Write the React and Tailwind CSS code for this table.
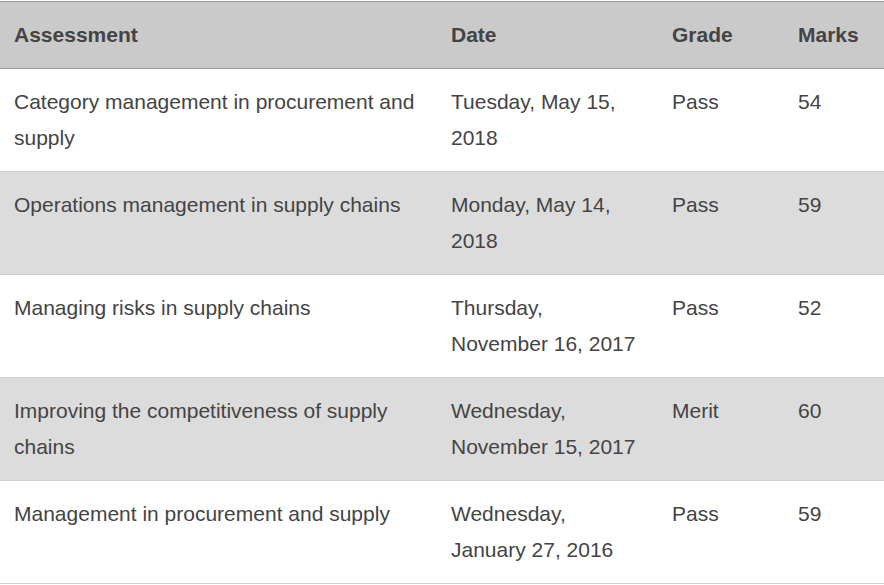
import React from 'react';

const rows = [
  { name: 'Category management in procurement and supply', date: 'Tuesday, May 15, 2018', grade: 'Pass', marks: '54' },
  { name: 'Operations management in supply chains', date: 'Monday, May 14, 2018', grade: 'Pass', marks: '59' },
  { name: 'Managing risks in supply chains', date: 'Thursday, November 16, 2017', grade: 'Pass', marks: '52' },
  { name: 'Improving the competitiveness of supply chains', date: 'Wednesday, November 15, 2017', grade: 'Merit', marks: '60' },
  { name: 'Management in procurement and supply', date: 'Wednesday, January 27, 2016', grade: 'Pass', marks: '59' },
];

const App = () => {
  return (
    <div className="w-[884px] bg-white pt-px font-['Liberation_Sans',Arial,sans-serif] text-[21px] leading-[36px] text-[#444]">
      <table className="w-full table-fixed border-collapse">
        <colgroup>
          <col className="w-[437px]" />
          <col className="w-[221px]" />
          <col className="w-[126px]" />
          <col className="w-[100px]" />
        </colgroup>
        <thead>
          <tr className="border-y border-[#999] bg-[#cacaca]">
            <th className="px-[14px] py-[15px] text-left align-top font-bold">Assessment</th>
            <th className="pl-[14px] pr-[20px] py-[15px] text-left align-top font-bold">Date</th>
            <th className="px-[14px] py-[15px] text-left align-top font-bold">Grade</th>
            <th className="px-[14px] py-[15px] text-left align-top font-bold">Marks</th>
          </tr>
        </thead>
        <tbody>
          {rows.map((r, i) => (
            <tr key={i} className={`border-b border-[#cfcfcf] ${i % 2 ? 'bg-[#dcdcdc]' : 'bg-white'}`}>
              <td className="h-[102px] px-[14px] py-[15px] align-top">{r.name}</td>
              <td className="pl-[14px] pr-[20px] py-[15px] align-top">{r.date}</td>
              <td className="px-[14px] py-[15px] align-top">{r.grade}</td>
              <td className="px-[14px] py-[15px] align-top">{r.marks}</td>
            </tr>
          ))}
        </tbody>
      </table>
    </div>
  );
};

export default App;
